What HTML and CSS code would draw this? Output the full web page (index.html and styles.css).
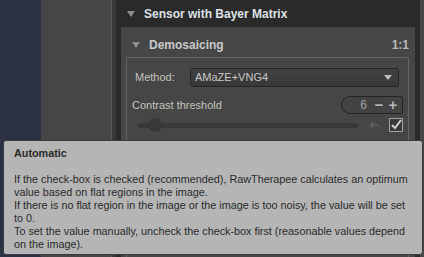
FILE: index.html
```html
<!DOCTYPE html>
<html>
<head>
<meta charset="utf-8">
<link rel="stylesheet" href="styles.css">
</head>
<body>
<div class="app">
  <div class="strip"></div>
  <div class="side"></div>
  <div class="divider"></div>
  <div class="tools">
    <div class="exp-head">
      <span class="tri"></span>
      <span class="exp-title">Sensor with Bayer Matrix</span>
    </div>
    <div class="exp-body">
      <div class="sub-head">
        <span class="tri"></span>
        <span class="sub-title">Demosaicing</span>
        <span class="ratio">1:1</span>
      </div>
      <div class="frame">
        <div class="row method">
          <span class="label">Method:</span>
          <div class="combo">
            <span>AMaZE+VNG4</span>
            <span class="combo-arrow"></span>
          </div>
        </div>
        <div class="row thr">
          <span class="label">Contrast threshold</span>
          <div class="spin">
            <span class="spin-val">6</span>
            <span class="spin-btn">&minus;</span>
            <span class="spin-btn">+</span>
          </div>
        </div>
        <div class="row slide">
          <div class="track"><span class="knob"></span></div>
          <svg class="reset" width="12" height="10" viewBox="0 0 12 10">
            <path d="M11 9 C10 4 7 3 4 4 L4 1 L0 5 L4 9 L4 6 C7 5 9 6 11 9 Z" fill="#5e5e5e"/>
          </svg>
          <span class="check">
            <svg width="12" height="12" viewBox="0 0 12 12">
              <path d="M2 6 L5 9 L11 1" stroke="#d0d0d0" stroke-width="2" fill="none"/>
            </svg>
          </span>
        </div>
      </div>
    </div>
  </div>
  <div class="gutter"></div>
  <div class="edge"></div>
</div>
<div class="tooltip">
  <div class="tt-title">Automatic</div>
  <div class="tt-blank"></div>
  <div class="tt-line">If the check-box is checked (recommended), RawTherapee calculates an optimum</div>
  <div class="tt-line">value based on flat regions in the image.</div>
  <div class="tt-line">If there is no flat region in the image or the image is too noisy, the value will be set</div>
  <div class="tt-line">to 0.</div>
  <div class="tt-line">To set the value manually, uncheck the check-box first (reasonable values depend</div>
  <div class="tt-line">on the image).</div>
</div>
</body>
</html>
```

FILE: styles.css
```css
html, body {
  margin: 0;
  padding: 0;
  background: #464646;
  font-family: "Liberation Sans", Arial, sans-serif;
  font-size: 11px;
}
.app {
  display: flex;
  width: 424px;
  height: 257px;
  overflow: hidden;
}
.strip {
  width: 41px;
  background: #2b3042;
}
.side {
  width: 70px;
  background: #464646;
}
.divider {
  width: 4px;
  border-left: 1px solid #585858;
  background: #383838;
}
.tools {
  width: 299px;
  background: #2a2a2a;
  display: flex;
  flex-direction: column;
}
.gutter {
  width: 5px;
  background: #2a2a2a;
}
.edge {
  width: 4px;
  background: #464646;
}
.exp-head {
  flex-shrink: 0;
  height: 27px;
  display: flex;
  align-items: center;
  padding-left: 11px;
}
.tri {
  width: 0;
  height: 0;
  border-left: 4px solid transparent;
  border-right: 4px solid transparent;
  border-top: 6px solid #8c8c8c;
  margin-right: 9px;
}
.exp-title {
  color: #dde2e8;
  font-weight: bold;
  font-size: 12px;
}
.exp-body {
  flex: 1;
  min-height: 0;
  margin-left: 5px;
  background: #464646;
  padding: 0 6px 0 5px;
  display: flex;
  flex-direction: column;
}
.sub-head {
  flex-shrink: 0;
  height: 24px;
  padding: 6px 0 0 6px;
  display: flex;
  align-items: center;
}
.sub-head .tri {
  margin-right: 9px;
}
.sub-title {
  color: #c9c9c9;
  font-weight: bold;
  font-size: 12px;
  flex: 1;
}
.ratio {
  color: #b8b8b8;
  font-weight: bold;
  font-size: 12px;
  margin-right: 0;
}
.frame {
  flex: 1;
  border: 1px solid #646464;
  border-bottom: none;
  border-radius: 2px 2px 0 0;
  padding: 9px 5px 0 5px;
}
.row {
  display: flex;
  align-items: center;
}
.label {
  color: #c2c4bc;
  font-size: 11px;
}
.method {
  height: 20px;
  padding-left: 3px;
}
.method .label {
  width: 55px;
}
.combo {
  flex: 1;
  height: 17px;
  margin-right: 4px;
  border: 1px solid #242424;
  border-radius: 3px;
  background: linear-gradient(#404040, #383838);
  display: flex;
  align-items: center;
  justify-content: space-between;
  padding: 0 6px 0 4px;
  color: #c8c8c8;
  font-size: 11px;
}
.combo-arrow {
  width: 0;
  height: 0;
  border-left: 4px solid transparent;
  border-right: 4px solid transparent;
  border-top: 5px solid #bdbdbd;
}
.thr {
  margin-top: 8px;
  height: 19px;
  justify-content: space-between;
}
.spin {
  width: 58px;
  height: 16px;
  border: 1px solid #242424;
  border-radius: 9px 2px 2px 9px;
  background: #434343;
  display: flex;
  align-items: center;
  justify-content: flex-end;
  padding-right: 2px;
}
.spin-val {
  color: #9aa0a6;
  font-size: 12px;
  margin-right: 5px;
}
.spin-btn {
  color: #b8b8b8;
  font-size: 15px;
  font-weight: bold;
  width: 14px;
  text-align: center;
  line-height: 14px;
}
.slide {
  margin-top: 2px;
  height: 18px;
}
.track {
  position: relative;
  margin-left: 6px;
  width: 223px;
  height: 5px;
  border-radius: 3px;
  background: #383838;
}
.knob {
  position: absolute;
  left: 10px;
  top: -5px;
  width: 14px;
  height: 14px;
  border-radius: 50%;
  background: #383838;
}
.reset {
  margin-left: 11px;
}
.check {
  margin-left: 8px;
  width: 12px;
  height: 12px;
  border: 1px solid #a0a0a0;
  background: #3a3a3a;
  display: flex;
  align-items: center;
  justify-content: center;
}
.tooltip {
  position: absolute;
  left: 3px;
  top: 140px;
  width: 398px;
  height: 107px;
  padding: 6px 10px 0 10px;
  background: #b5b5b5;
  border: 1px solid #3c3c3c;
  border-radius: 3px;
  color: #2a2a2a;
  font-size: 10.8px;
  line-height: 13px;
}
.tt-title {
  font-weight: bold;
  white-space: nowrap;
}
.tt-blank {
  height: 13px;
}
.tt-line {
  white-space: nowrap;
}
```
